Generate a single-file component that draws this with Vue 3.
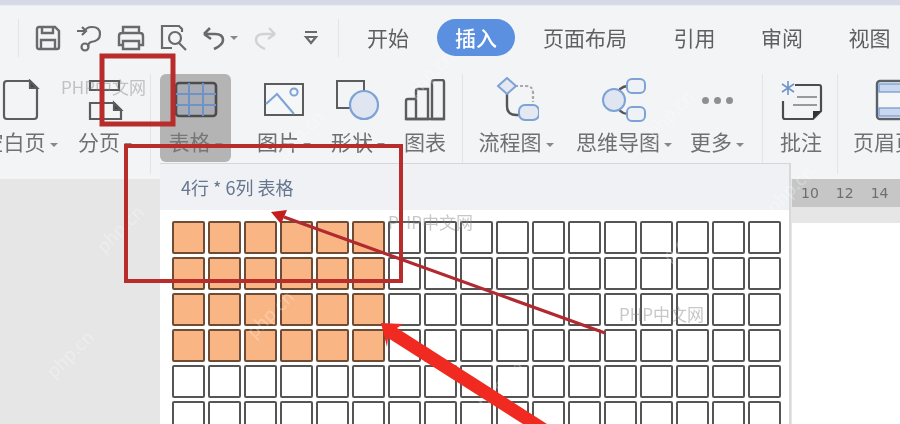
<script setup>
const tabs = [
  { name: "开始", width: 98 },
  { name: "插入", width: 78, active: true },
  { name: "页面布局", width: 140 },
  { name: "引用", width: 79 },
  { name: "审阅", width: 96 },
  { name: "视图", width: 79 },
];

// ml = gap before the tool, sep = gap before a divider drawn after it
const tools = [
  { id: "blank", label: "空白页", caret: true, width: 80, ml: 0 },
  { id: "split", label: "分页", caret: true, width: 90, ml: 0, sep: 0 },
  { id: "table", label: "表格", caret: true, width: 71, ml: 9, active: true },
  { id: "picture", label: "图片", caret: true, width: 64, ml: 21 },
  { id: "shape", label: "形状", caret: true, width: 64, ml: 10 },
  { id: "chart", label: "图表", width: 50, ml: 10, sep: 12 },
  { id: "flow", label: "流程图", caret: true, width: 84, ml: 11 },
  { id: "mind", label: "思维导图", caret: true, width: 108, ml: 12 },
  { id: "more", label: "更多", caret: true, width: 60, ml: 9, sep: 15 },
  { id: "note", label: "批注", width: 50, ml: 13, sep: 11 },
  { id: "header", label: "页眉页脚", width: 88, ml: 13 },
];

const cols = 17;
const rows = 6;
const cells = [];
for (let r = 0; r < rows; r++) {
  for (let c = 0; c < cols; c++) {
    cells.push({ id: r + "-" + c, on: r < 4 && c < 6 });
  }
}

const faint = [
  { x: 90, y: 215 }, { x: 270, y: 120 }, { x: 400, y: 60 }, { x: 640, y: 100 },
  { x: 760, y: 175 }, { x: 40, y: 340 }, { x: 240, y: 300 }, { x: 470, y: 370 },
  { x: 640, y: 240 }, { x: 840, y: 240 },
];
</script>

<template>
  <div class="app">
    <div class="top-strip"></div>

    <div class="quick-row">
      <span class="sep quick-sep first"></span>
      <div class="quick-icons">
        <svg width="28" height="28" viewBox="0 0 28 28" fill="none" stroke="#6a6a6a" stroke-width="2.4">
          <path d="M3 5q0-2 2-2h16l4 4v16q0 2-2 2H5q-2 0-2-2z" />
          <path d="M8 3v6h11V3M7 25v-9h14v9" />
        </svg>
        <svg width="28" height="28" viewBox="0 0 28 28" fill="none" stroke="#6a6a6a" stroke-width="2.2">
          <path d="M9 8q2-5 8-5 8 0 8 7t-9 8q-3 1-3 5M2 7h9M7 3l4 4-4 4" />
          <circle cx="10" cy="23" r="3.5" />
        </svg>
        <svg width="30" height="28" viewBox="0 0 30 28" fill="none" stroke="#6a6a6a" stroke-width="2.4">
          <path d="M7 9V3h16v6M7 21H3V12q0-3 3-3h18q3 0 3 3v9h-4" />
          <path d="M7 17h16v8H7z" />
        </svg>
        <svg width="30" height="30" viewBox="0 0 30 30" fill="none" stroke="#6a6a6a" stroke-width="2.2">
          <path d="M13 25H3V3h17l3 3v3" />
          <circle cx="16" cy="15" r="6" />
          <path d="M20 20l7 7" />
        </svg>
        <svg class="undo" width="24" height="26" viewBox="0 0 24 26" fill="none" stroke="#6a6a6a" stroke-width="2.6">
          <path d="M2 9l6-6M2 9l7 5M3 9h10q8 0 8 6 0 5-9 9" />
        </svg>
        <i class="caret mini"></i>
        <svg class="redo" width="24" height="26" viewBox="0 0 24 26" fill="none" stroke="#d0d2d4" stroke-width="2.4">
          <path d="M22 9l-6-6M22 9l-7 5M21 9H11q-8 0-8 6 0 5 9 9" />
        </svg>
        <svg class="fold" width="16" height="16" viewBox="0 0 16 16" fill="none" stroke="#6a6a6a" stroke-width="2.2">
          <path d="M2 2h12M3 7l5 6 5-6z" />
        </svg>
      </div>
      <span class="sep quick-sep"></span>
      <nav class="tabs">
        <span
          v-for="tab in tabs"
          :key="tab.name"
          class="tab"
          :class="{ active: tab.active }"
          :style="{ width: tab.width + 'px' }"
        >{{ tab.name }}</span>
      </nav>
    </div>

    <div class="ribbon">
      <template v-for="tool in tools" :key="tool.id">
        <div
          class="tool"
          :class="{ active: tool.active }"
          :style="{ width: tool.width + 'px', marginLeft: tool.ml + 'px' }"
        >
          <div class="tool-icon">
            <svg v-if="tool.id === 'blank'" width="40" height="42" viewBox="0 0 40 42" fill="none" stroke="#5c5c5c" stroke-width="2.2">
              <path d="M4 5q0-3 3-3h23l7 7v28q0 3-3 3H7q-3 0-3-3z" />
              <path d="M30 2l7 7h-7z" fill="#444" />
            </svg>
            <svg v-else-if="tool.id === 'split'" width="40" height="42" viewBox="0 0 40 42" fill="none" stroke="#5c5c5c" stroke-width="2.2">
              <path d="M5 2h29v9H5z" />
              <path d="M5 24h24l7 7v9H5z" />
              <path d="M29 24l7 7h-7z" fill="#444" />
            </svg>
            <svg v-else-if="tool.id === 'table'" width="44" height="38" viewBox="0 0 44 38" fill="none">
              <rect x="2" y="2" width="40" height="33" rx="3" fill="#a9adb3" stroke="#4c4c4c" stroke-width="2.6" />
              <path d="M2 13h40M2 24h40M15 2v33M29 2v33" stroke="#6f93c8" stroke-width="2" />
            </svg>
            <svg v-else-if="tool.id === 'picture'" width="42" height="36" viewBox="0 0 42 36" fill="none">
              <rect x="2" y="2" width="38" height="31" fill="#f5f6f7" stroke="#5c5c5c" stroke-width="2" />
              <path d="M3 22l11-10 17 20" stroke="#7da2d6" stroke-width="2" />
              <circle cx="31" cy="10" r="3.6" stroke="#7da2d6" stroke-width="2" />
            </svg>
            <svg v-else-if="tool.id === 'shape'" width="46" height="42" viewBox="0 0 46 42" fill="none">
              <rect x="2" y="2" width="27" height="27" stroke="#5c5c5c" stroke-width="2" />
              <circle cx="29" cy="26" r="14" fill="#dfe6f2" stroke="#7da2d6" stroke-width="2.2" />
            </svg>
            <svg v-else-if="tool.id === 'chart'" width="42" height="42" viewBox="0 0 42 42" fill="none" stroke="#5c5c5c" stroke-width="2.4">
              <path d="M2 40V22q0-2 2-2h8v20zM12 40V12q0-2 2-2h10v30zM28 40V3q0-2 2-2h8q2 0 2 2v37z" />
              <path d="M2 40h38" />
            </svg>
            <svg v-else-if="tool.id === 'flow'" width="46" height="46" viewBox="0 0 46 46" fill="none">
              <path d="M14 15v14q0 9 9 9h4" stroke="#555" stroke-width="2.4" />
              <path d="M22 9h11q7 0 7 7v9" stroke="#aaa" stroke-width="2.2" stroke-dasharray="3 2" />
              <path d="M14 1l9 8-9 8-9-8z" fill="#e3e8f1" stroke="#7da2d6" stroke-width="2" />
              <rect x="26" y="28" width="20" height="15" rx="6" fill="#e3e8f1" stroke="#7da2d6" stroke-width="2" />
            </svg>
            <svg v-else-if="tool.id === 'mind'" width="46" height="46" viewBox="0 0 46 46" fill="none">
              <path d="M15 20q3-11 12-11M15 26q3 11 12 11" stroke="#555" stroke-width="2.4" />
              <circle cx="13" cy="23" r="11" fill="#dfe6f2" stroke="#7da2d6" stroke-width="2" />
              <rect x="26" y="2" width="18" height="14" rx="5" fill="#eef1f6" stroke="#7da2d6" stroke-width="2" />
              <rect x="26" y="30" width="18" height="14" rx="5" fill="#eef1f6" stroke="#7da2d6" stroke-width="2" />
            </svg>
            <div v-else-if="tool.id === 'more'" class="dots"><i></i><i></i><i></i></div>
            <svg v-else-if="tool.id === 'note'" width="44" height="42" viewBox="0 0 44 42" fill="none">
              <path d="M16 6h24q2 0 2 2v24l-8 8H6q-2 0-2-2V22" stroke="#4c4c4c" stroke-width="2.2" />
              <path d="M34 40l8-8h-8z" fill="#333" />
              <path d="M18 18h20M14 26h24" stroke="#9a9a9a" stroke-width="1.8" />
              <path d="M9 2v14M3 5l12 8M15 5L3 13" stroke="#6f93c8" stroke-width="1.6" />
            </svg>
            <svg v-else-if="tool.id === 'header'" width="40" height="42" viewBox="0 0 40 42" fill="none">
              <rect x="2" y="2" width="36" height="38" rx="3" fill="#f5f6f7" stroke="#5c6068" stroke-width="2.4" />
              <rect x="4" y="5" width="32" height="8" fill="#c9d8ee" stroke="#7da2d6" stroke-width="1.4" />
              <rect x="4" y="29" width="32" height="8" fill="#c9d8ee" stroke="#7da2d6" stroke-width="1.4" />
            </svg>
          </div>
          <div class="tool-label">
            {{ tool.label }}<i v-if="tool.caret" class="caret"></i>
          </div>
        </div>
        <span
          v-if="tool.sep !== undefined"
          class="sep ribbon-sep"
          :style="{ marginLeft: tool.sep + 'px' }"
        ></span>
      </template>
    </div>

    <div class="body">
      <div class="gutter"></div>
      <div class="page-side">
        <div class="ruler">
          <span>10</span>
          <span>12</span>
          <span>14</span>
        </div>
        <div class="ruler-low"></div>
      </div>
    </div>

    <div class="table-menu">
      <div class="menu-head">4行 * 6列 表格</div>
      <div class="grid">
        <span v-for="cell in cells" :key="cell.id" class="cell" :class="{ on: cell.on }"></span>
      </div>
    </div>

    <span class="mark mark-a">PHP中文网</span>
    <span class="mark mark-b">PHP中文网</span>
    <span class="mark mark-c">PHP中文网</span>
    <span
      v-for="f in faint"
      :key="f.x"
      class="faint"
      :style="{ left: f.x + 'px', top: f.y + 'px' }"
    >php.cn</span>

    <svg class="notes" width="900" height="424" viewBox="0 0 900 424" fill="none">
      <rect x="102" y="56" width="71" height="68" stroke="#b92c2c" stroke-width="5" />
      <rect x="126" y="146" width="275" height="135" stroke="#b92c2c" stroke-width="4" />
      <path d="M605 333L284 217" stroke="#b02a30" stroke-width="3.2" />
      <path d="M271 212l16-2-6 14z" fill="#c41f1f" />
      <path d="M381 323l22 1-6 4 150 96h-24L388 338l-1 9z" fill="#f02a20" />
    </svg>
  </div>
</template>

<style scoped>
.app {
  position: relative;
  width: 900px;
  height: 424px;
  overflow: hidden;
  display: flex;
  flex-direction: column;
  background: #f3f4f6;
  font-family: "Noto Sans CJK SC", "Liberation Sans", sans-serif;
  filter: blur(0.6px);
}

.top-strip {
  height: 5px;
  background: #d5dae6;
  border-bottom: 1px solid #eceef3;
}

.quick-row {
  height: 53px;
  box-sizing: border-box;
  padding-top: 10px;
  display: flex;
  align-items: center;
  flex-shrink: 0;
}

.sep {
  width: 1px;
  background: #e3e4e6;
  flex-shrink: 0;
}

.quick-sep {
  height: 38px;
}

.quick-sep.first {
  margin-left: 18px;
}

.quick-icons {
  display: flex;
  align-items: center;
  width: 319px;
  flex-shrink: 0;
  padding-left: 15px;
  box-sizing: border-box;
}

.quick-icons svg {
  margin-right: 13px;
}

.quick-icons .undo {
  margin-right: 4px;
}

.quick-icons .redo {
  margin-left: 15px;
  margin-right: 26px;
}

.quick-icons .fold {
  margin-right: 0;
}

.tabs {
  display: flex;
  align-items: center;
  flex-shrink: 0;
}

.tab {
  height: 37px;
  line-height: 36px;
  text-align: center;
  font-size: 21px;
  color: #5f5f5f;
  flex-shrink: 0;
}

.tab.active {
  background: #5b8fe0;
  color: #fff;
  border-radius: 19px;
  font-weight: 500;
}

.ribbon {
  height: 120px;
  margin-left: -20px;
  display: flex;
  align-items: flex-start;
  flex-shrink: 0;
  padding-top: 15px;
  box-sizing: border-box;
}

.tool {
  height: 88px;
  display: flex;
  flex-direction: column;
  align-items: center;
  flex-shrink: 0;
  border-radius: 6px;
}

.tool.active {
  background: #b4b4b4;
}

.tool-icon {
  height: 52px;
  display: flex;
  align-items: center;
  justify-content: center;
}

.tool-label {
  margin-top: 0;
  font-size: 21px;
  line-height: 30px;
  color: #707070;
  white-space: nowrap;
}

.tool.active .tool-label {
  color: #777;
}

.caret {
  display: inline-block;
  margin-left: 4px;
  vertical-align: 3px;
  border-left: 4px solid transparent;
  border-right: 4px solid transparent;
  border-top: 4px solid #888;
}

.caret.mini {
  margin: 0;
  vertical-align: 0;
}

.ribbon-sep {
  height: 100px;
  flex-shrink: 0;
}

.dots {
  display: flex;
  gap: 5px;
}

.dots i {
  width: 7px;
  height: 7px;
  border-radius: 50%;
  background: #8f8f8f;
}

.body {
  flex: 1;
  display: flex;
}

.gutter {
  flex: 1;
  background: #e6e6e6;
}

.page-side {
  width: 108px;
  display: flex;
  flex-direction: column;
  background: #fff;
}

.ruler {
  height: 28px;
  background: #c6c6c6;
  display: flex;
  align-items: center;
  gap: 17px;
  padding-left: 9px;
  font-family: "DejaVu Sans", sans-serif;
  font-size: 14px;
  color: #6f6f6f;
}

.ruler-low {
  height: 16px;
  background: #e6e6e6;
}

.table-menu {
  position: absolute;
  left: 160px;
  top: 163px;
  width: 631px;
  height: 261px;
  background: #fff;
  border-top: 1px solid #d5d6d8;
  border-right: 2px solid #d8d9db;
  box-sizing: border-box;
}

.menu-head {
  height: 46px;
  padding-left: 21px;
  line-height: 47px;
  font-size: 18px;
  color: #66768e;
  background: #eff1f4;
}

.grid {
  display: grid;
  grid-template-columns: repeat(17, 33px);
  grid-auto-rows: 33px;
  gap: 3px;
  padding: 11px 0 0 12px;
}

.cell {
  box-sizing: border-box;
  border: 2px solid #555;
  border-radius: 2px;
  background: #fff;
}

.cell.on {
  background: #fab584;
  border-color: #6e4c36;
}

.mark {
  position: absolute;
  font-size: 17px;
  color: rgba(130, 130, 130, 0.45);
  white-space: nowrap;
}

.mark-a {
  left: 61px;
  top: 74px;
}

.mark-b {
  left: 388px;
  top: 209px;
}

.mark-c {
  left: 619px;
  top: 301px;
}

.faint {
  position: absolute;
  font-size: 18px;
  color: rgba(255, 255, 255, 0.28);
  transform: rotate(-45deg);
}

.notes {
  position: absolute;
  left: 0;
  top: 0;
}
</style>
